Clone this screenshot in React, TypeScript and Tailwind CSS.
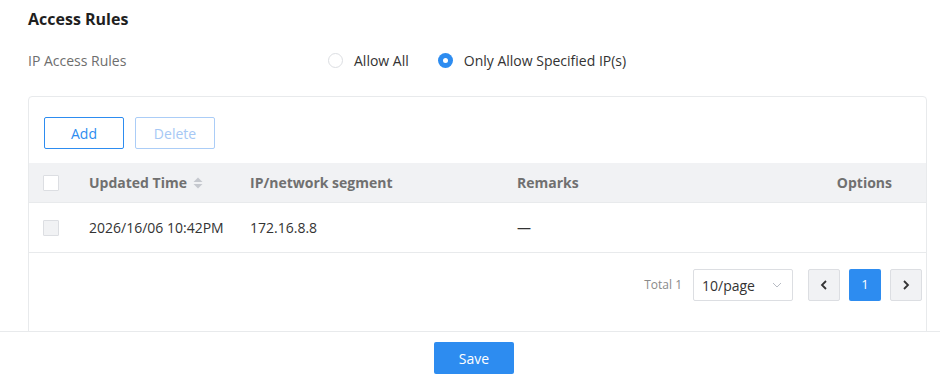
import React from "react";

const font = { fontFamily: '"Open Sans", "Noto Sans", sans-serif' };

function SortIcon() {
  return (
    <svg width="10" height="12" viewBox="0 0 10 12" className="ml-[6px]">
      <path d="M5 0.5 L9.5 5 H0.5 Z" fill="#c5c8ce" />
      <path d="M5 11.5 L9.5 7 H0.5 Z" fill="#c5c8ce" />
    </svg>
  );
}

export default function App() {
  return (
    <div className="w-[940px] h-[384px] bg-white flex flex-col overflow-hidden" style={font}>
      <div className="h-[331px] overflow-hidden pl-[28px] pr-[13px]">
        <div className="pt-[8px] text-[16px] leading-[22px] font-bold text-[#1f1f1f]">Access Rules</div>
        <div className="mt-[19px] flex items-center h-[22px] text-[14px]">
          <div className="w-[300px] text-[#6e6e6e]">IP Access Rules</div>
          <div className="flex items-center">
            <span className="w-[15px] h-[15px] rounded-full border border-[#dcdee2] bg-white" />
            <span className="ml-[11px] text-[#333]">Allow All</span>
          </div>
          <div className="flex items-center ml-[29px]">
            <span className="w-[15px] h-[15px] rounded-full bg-[#2d8cf0] flex items-center justify-center">
              <span className="w-[5px] h-[5px] rounded-full bg-white" />
            </span>
            <span className="ml-[11px] text-[#333]">Only Allow Specified IP(s)</span>
          </div>
        </div>
        <div className="mt-[25px] h-[300px] border border-[#e8eaec] rounded-[4px]">
          <div className="pt-[20px] pl-[15px] flex gap-[11px] text-[14px]">
            <button className="w-[80px] h-[32px] border border-[#2d8cf0] rounded-[2px] text-[#2d8cf0]">Add</button>
            <button className="w-[80px] h-[32px] border border-[#abcdf7] rounded-[2px] text-[#a6c8f5]">Delete</button>
          </div>
          <div className="mt-[14px] h-[40px] bg-[#f1f2f4] border-b border-[#e8eaec] flex items-center text-[14px] font-bold text-[#707070]">
            <div className="w-[60px] pl-[14px] flex items-center">
              <span className="w-[16px] h-[16px] border border-[#dcdee2] bg-white rounded-[1px]" />
            </div>
            <div className="w-[161px] flex items-center">Updated Time<SortIcon /></div>
            <div className="w-[267px]">IP/network segment</div>
            <div className="flex-1">Remarks</div>
            <div className="pr-[34px]">Options</div>
          </div>
          <div className="h-[50px] border-b border-[#e8eaec] flex items-center text-[14px] text-[#333]">
            <div className="w-[60px] pl-[14px] flex items-center">
              <span className="w-[16px] h-[16px] border border-[#dcdee2] bg-[#f1f2f4] rounded-[1px]" />
            </div>
            <div className="w-[161px]">2026/16/06 10:42PM</div>
            <div className="w-[267px]">172.16.8.8</div>
            <div className="flex-1">—</div>
          </div>
          <div className="mt-[16px] flex items-center justify-end pr-[4px] text-[14px]">
            <span className="text-[12px] text-[#8a8a8a]">Total 1</span>
            <div className="ml-[11px] w-[100px] h-[32px] border border-[#dcdee2] rounded-[2px] flex items-center justify-between pl-[8px] pr-[10px] text-[#333]">
              <span>10/page</span>
              <svg width="10" height="6" viewBox="0 0 10 6">
                <path d="M1 1 L5 5 L9 1" fill="none" stroke="#b8bcc4" strokeWidth="1" />
              </svg>
            </div>
            <button className="ml-[15px] w-[32px] h-[32px] bg-[#f1f2f4] border border-[#dcdee2] rounded-[2px] flex items-center justify-center">
              <svg width="8" height="10" viewBox="0 0 8 10">
                <path d="M6 1 L2 5 L6 9" fill="none" stroke="#333" strokeWidth="1.8" />
              </svg>
            </button>
            <button className="ml-[9px] w-[32px] h-[32px] bg-[#2d8cf0] rounded-[2px] text-white text-[13px]">1</button>
            <button className="ml-[9px] w-[32px] h-[32px] bg-[#f1f2f4] border border-[#dcdee2] rounded-[2px] flex items-center justify-center">
              <svg width="8" height="10" viewBox="0 0 8 10">
                <path d="M2 1 L6 5 L2 9" fill="none" stroke="#333" strokeWidth="1.8" />
              </svg>
            </button>
          </div>
        </div>
      </div>
      <div className="flex-1 border-t border-[#e8eaec] flex justify-center pt-[10px] pl-[8px]">
        <button className="w-[80px] h-[32px] bg-[#2d8cf0] rounded-[2px] text-white text-[14px]">Save</button>
      </div>
    </div>
  );
}
